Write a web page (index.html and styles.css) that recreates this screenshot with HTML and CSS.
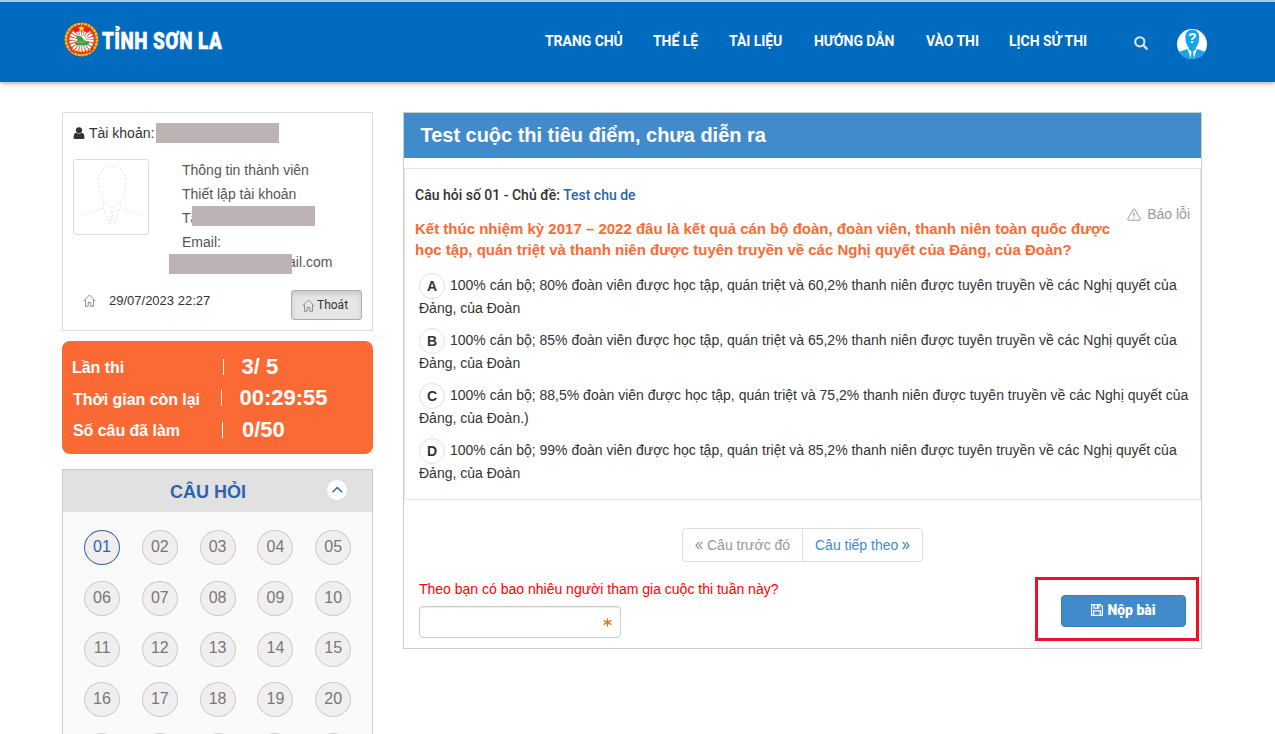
FILE: index.html
```html
<!DOCTYPE html>
<html lang="vi">
<head>
<meta charset="utf-8">
<title>Tỉnh Sơn La - Cuộc thi</title>
<link rel="stylesheet" href="styles.css">
</head>
<body>
<header class="header">
  <a class="brand">
    <svg class="emblem" viewBox="0 0 36 36">
      <circle cx="18" cy="18" r="17.500" fill="#c9471f"/>
      <circle cx="18" cy="18" r="16" fill="none" stroke="#edbe25" stroke-width="2.600" stroke-dasharray="3 .7"/>
      <circle cx="18" cy="18" r="13.500" fill="#e0402a"/>
      <circle cx="18" cy="18.500" r="8.500" fill="none" stroke="#fff" stroke-width="8" stroke-dasharray="1.850 .82"/>
      <circle cx="18" cy="19" r="5" fill="#fff"/>
      <path d="M8 6.500Q18-1 28 6.500L25 11Q18 8 11 11Z" fill="#e62418"/>
      <path d="M18 3l1 2.500h2.600l-2 1.600.8 2.600-2.400-1.500-2.400 1.500.8-2.600-2-1.600H17z" fill="#ffe52e"/>
      <path d="M12 14l6 1 3 4 5 1-1 4H12l-1-3 3-2z" fill="#2fa44c"/>
      <path d="M12 20h9v1.200h-9z" fill="#d49b35"/>
      <path d="M5 26q13 8 26 0l-2 4q-11 7-22 0z" fill="#e22b20"/>
      <path d="M8 28q10 5 20 0M11 32q7 3 14 0" fill="none" stroke="#f6c82b" stroke-width="1.300" stroke-dasharray="2 1"/>
    </svg>
    <span class="brand-name">TỈNH SƠN LA</span>
  </a>
  <nav class="nav">
    <a class="n1">TRANG CHỦ</a><a class="n2">THỂ LỆ</a><a class="n3">TÀI LIỆU</a><a class="n4">HƯỚNG DẪN</a><a class="n5">VÀO THI</a><a class="n6">LỊCH SỬ THI</a>
  </nav>
  <svg class="search" viewBox="0 0 13 13"><circle cx="5.400" cy="5.400" r="4.300" fill="none" stroke="#dfe3e8" stroke-width="1.900"/><path d="M8.600 8.600l3.200 3.200" stroke="#dfe3e8" stroke-width="2.200" stroke-linecap="round"/></svg>
  <svg class="user" viewBox="0 0 30 30">
    <defs><clipPath id="disc"><circle cx="15" cy="15" r="15"/></clipPath></defs>
    <g clip-path="url(#disc)"><rect width="30" height="30" fill="#fff"/>
    <path d="M15.300.8c4.700 0 7 3.200 6.900 8 0 4.200-1.600 8-3.400 10v2l-3.500 1.400-3.500-1.400v-2c-1.800-2-3.400-5.800-3.400-10C8.300 4 10.600.8 15.300.8z" fill="#15a4ec"/>
    <path d="M0 23.500L10.500 20 14 30H0zM30 23.500L20 20l-3.500 10H30z" fill="#15a4ec"/>
    <path d="M13.800 21.500h3l-.7 2 .9 6.500h-3.400l.9-6.500z" fill="#15a4ec"/></g>
    <text class="user-mark" x="15.300" y="14.200" text-anchor="middle">?</text>
  </svg>
</header>
<main class="page">
  <aside class="side">
    <section class="card account">
      <div class="acc-name">
        <svg class="ico-user" viewBox="0 0 12 12"><circle cx="6" cy="3.300" r="3.100" fill="#333"/><path d="M3 5.800q3 2.300 6 0 2.500.7 2.500 4.700Q11.500 12 10 12H2Q.5 12 .5 10.500.5 6.500 3 5.800z" fill="#333"/></svg>
        <span class="t-acc">Tài khoản:</span><i class="mask"></i>
      </div>
      <div class="acc-body">
        <div class="avatar"><svg viewBox="0 0 70 70" fill="none" stroke="#dcdcdc" stroke-dasharray="1.500 2.500"><path d="M36 4C25 4 22 13 22 21c0 9 4 14 6 19l8 6 8-6c3-5 6-10 6-19C50 12 46 4 36 4zM28 40l-1 6L2 54M44 40l1 6 23 8M27 46l7 16 2-14 2 14 6-16"/></svg></div>
        <ul class="acc-links">
          <li class="l1">Thông tin thành viên</li>
          <li class="l2">Thiết lập tài khoản</li>
          <li class="l3">Tà<i class="mask over-name"></i></li>
          <li class="l4">Email:</li>
          <li class="mail"><i class="mask over-mail"></i><span class="l5">ail.com</span></li>
        </ul>
      </div>
      <div class="acc-foot">
        <svg class="house" viewBox="0 0 13 13"><path d="M.6 7L6.500 1l5.900 6M2.500 5.800v6.500h2.700V8.500h2.600v3.800h2.700V5.800" fill="none" stroke="#8c8c8c"/></svg>
        <span class="date">29/07/2023 22:27</span>
        <button class="exit"><svg viewBox="0 0 13 13"><path d="M.6 7L6.500 1l5.900 6M2.500 5.800v6.500h2.700V8.500h2.600v3.800h2.700V5.800" fill="none" stroke="#8c8c8c"/></svg><span>Thoát</span></button>
      </div>
    </section>
    <section class="stats">
      <div class="stat s1"><b>Lần thi</b><i></i><strong>3/ 5</strong></div>
      <div class="stat s2"><b>Thời gian còn lại</b><i></i><strong>00:29:55</strong></div>
      <div class="stat s3"><b>Số câu đã làm</b><i></i><strong>0/50</strong></div>
    </section>
    <section class="questions">
      <div class="q-head"><h2>CÂU HỎI</h2><span class="toggle"><svg viewBox="0 0 20 20"><path d="M5.500 12.200L10.300 7.400l4.800 4.800" fill="none" stroke="#2c63ae" stroke-width="1.400"/></svg></span></div>
      <div class="q-grid">
        <span class="num current">01</span><span class="num">02</span><span class="num">03</span><span class="num">04</span><span class="num">05</span>
        <span class="num">06</span><span class="num">07</span><span class="num">08</span><span class="num">09</span><span class="num">10</span>
        <span class="num">11</span><span class="num">12</span><span class="num">13</span><span class="num">14</span><span class="num">15</span>
        <span class="num">16</span><span class="num">17</span><span class="num">18</span><span class="num">19</span><span class="num">20</span>
        <span class="num"></span><span class="num"></span><span class="num"></span><span class="num"></span><span class="num"></span>
      </div>
    </section>
  </aside>
  <section class="exam">
    <h1 class="exam-title"><span>Test cuộc thi tiêu điểm, chưa diễn ra</span></h1>
    <div class="question">
      <p class="topic"><span class="tp1">Câu hỏi số 01 - Chủ đề:</span> <a class="tp2">Test chu de</a></p>
      <div class="ask">
        <p class="prompt"><span class="pr1">Kết thúc nhiệm kỳ 2017 – 2022 đâu là kết quả cán bộ đoàn, đoàn viên, thanh niên toàn quốc được</span><br><span class="pr2">học tập, quán triệt và thanh niên được tuyên truyền về các Nghị quyết của Đảng, của Đoàn?</span></p>
        <a class="report"><svg viewBox="0 0 14 13"><path d="M6.300 1.200q.7-.8 1.400 0l5.400 9.500q.4 1.400-.8 1.500H1.700Q.5 12.100.9 10.700z" fill="none" stroke="#999"/><path d="M7 4.500v4M7 9.500v1" stroke="#999" stroke-width="1.100"/></svg><span>Báo lỗi</span></a>
      </div>
      <div class="answers">
        <p class="answer"><b class="key">A</b><span class="a1">100% cán bộ; 80% đoàn viên được học tập, quán triệt và 60,2% thanh niên được tuyên truyền về các Nghị quyết của</span><br><span class="an">Đảng, của Đoàn</span></p>
        <p class="answer"><b class="key">B</b><span class="a1">100% cán bộ; 85% đoàn viên được học tập, quán triệt và 65,2% thanh niên được tuyên truyền về các Nghị quyết của</span><br><span class="an">Đảng, của Đoàn</span></p>
        <p class="answer"><b class="key">C</b><span class="a1">100% cán bộ; 88,5% đoàn viên được học tập, quán triệt và 75,2% thanh niên được tuyên truyền về các Nghị quyết của</span><br><span class="an">Đảng, của Đoàn.)</span></p>
        <p class="answer"><b class="key">D</b><span class="a1">100% cán bộ; 99% đoàn viên được học tập, quán triệt và 85,2% thanh niên được tuyên truyền về các Nghị quyết của</span><br><span class="an">Đảng, của Đoàn</span></p>
      </div>
    </div>
    <div class="pager">
      <a class="prev"><svg viewBox="0 0 8 9"><path d="M4 1L.9 4.500 4 8M7.300 1L4.200 4.500 7.300 8" fill="none" stroke="currentColor" stroke-width="1.200"/></svg><span>Câu trước đó</span></a><a class="next"><span>Câu tiếp theo</span><svg viewBox="0 0 8 9"><path d="M.7 1l3.100 3.500L.7 8M4 1l3.100 3.500L4 8" fill="none" stroke="currentColor" stroke-width="1.200"/></svg></a>
    </div>
    <div class="submit-row">
      <label class="guess"><span class="guess-text">Theo bạn có bao nhiêu người tham gia cuộc thi tuần này?</span>
        <span class="field"><svg viewBox="0 0 9 9"><path d="M4.500.3v8.400M.6 2.400l7.800 4.200M.6 6.600l7.800-4.200" stroke="#f87012" stroke-width="1.200"/></svg></span></label>
      <div class="highlight"><button class="submit"><svg viewBox="0 0 12 12" fill="none" stroke="#fff" stroke-width="1.200"><path d="M.6.6h8.700l2.100 2.100v8.700H.6zM3 .6v3.600h5V.6M2.700 11.400V6.800h6.600v4.600M6.500 1v2.500"/></svg><span>Nộp bài</span></button></div>
    </div>
  </section>
</main>
</body>
</html>
```
FILE: styles.css
```css
* { box-sizing: border-box; }
body { margin: 0; height: 734px; overflow: hidden; background: #fff; color: #333; font: 14px/20px "Liberation Sans", Arial, sans-serif; }
h1, h2, p, ul { margin: 0; padding: 0; }
ul { list-style: none; }
svg { display: block; flex: none; }
span, a { white-space: nowrap; }
button { font-family: inherit; margin: 0; padding: 0; }

.header { height: 82px; display: flex; align-items: flex-start; background: #006bbf; border-top: 2px solid #9fd0dc; box-shadow: 0 1px 5px rgba(0, 0, 0, .4); padding-left: 64px; }
.brand { display: flex; width: 481px; padding-top: 20px; }
.emblem { width: 35px; height: 35px; }
.brand-name { color: #fff; font: 900 24px/35px Roboto, sans-serif; letter-spacing: .6px; -webkit-text-stroke: .5px #fff; margin: 2px 0 0 3px; transform: scaleX(.785); transform-origin: 0 0; }
.nav { display: flex; width: 588px; padding-top: 29px; color: #fff; font: 700 14px/20px Roboto, sans-serif; letter-spacing: -.05px; }
.n1 { width: 108px; }
.n2 { width: 76px; }
.n3 { width: 85px; }
.n4 { width: 112px; }
.n5 { width: 83px; }
.search { width: 14px; height: 14px; margin: 34px 0 0 1px; }
.user { width: 30px; height: 30px; margin: 27px 0 0 29px; }
.user-mark { font: 700 14px "Liberation Sans", sans-serif; fill: #fff; }

.page { display: flex; align-items: flex-start; gap: 30px; padding: 30px 0 0 62px; }
.side { width: 311px; display: flex; flex-direction: column; }
.account { height: 219px; border: 1px solid #ddd; padding: 10px; }
.acc-name { display: flex; align-items: center; height: 20px; }
.ico-user { width: 12px; height: 12px; margin-right: 4px; }
.mask { display: block; width: 123px; height: 20px; background: #bdb3b4; }
.acc-name .mask { margin-left: auto; margin-right: 83px; }
.acc-body { display: flex; padding-top: 16px; height: 136px; }
.avatar { width: 76px; height: 76px; border: 1px solid #ddd; border-radius: 3px; padding: 2px; }
.acc-links { margin-left: 33px; margin-top: -1px; line-height: 24px; color: #555; }
.acc-links li { position: relative; height: 24px; }
.over-name { position: absolute; left: 10px; top: 0; }
.acc-links .mail { display: flex; height: 20px; line-height: 18px; margin-left: -13px; margin-top: -1px; }
.acc-links .mail .mask { position: relative; z-index: 1; margin-top: 1px; }
.mail span { margin-left: -4px; }
.acc-foot { display: flex; align-items: flex-start; padding-left: 10px; }
.house { width: 13px; height: 13px; margin-top: 15px; }
.date { font-size: 13px; line-height: 20px; margin: 12px 0 0 13px; }
.exit { display: flex; align-items: center; gap: 2px; width: 71px; height: 30px; margin: 11px 0 0 auto; padding-left: 10px; border: 1px solid #adadad; border-radius: 3px; background: #e6e6e6; box-shadow: inset 0 3px 5px rgba(0, 0, 0, .125); font: 12px/18px Roboto, sans-serif; color: #333; }
.exit svg { width: 13px; height: 13px; }

.stats { height: 113px; margin-top: 10px; padding: 10px; background: #fb6a35; border-radius: 8px; color: #fff; }
.stat { display: flex; align-items: center; height: 31.500px; }
.stat b { width: 151px; font-size: 16px; padding-top: 3px; letter-spacing: -.05px; }
.stat i { width: 1px; height: 16px; background: #fff; }
.stat strong { font-size: 22px; margin-left: 17.500px; }
.s2 b { width: 149px; padding-left: 1px; }
.s3 b { width: 150px; padding-left: 1px; }
.s3 strong { margin-left: 19px; }

.questions { margin-top: 15px; border: 1px solid #ccc; background: #fafafa; height: 280px; overflow: hidden; }
.q-head { display: flex; align-items: center; height: 42px; background: #e1e1e1; }
.q-head h2 { width: 264px; padding-left: 107px; font-size: 18px; color: #2c63ae; white-space: nowrap; padding-top: 2px; }
.toggle { width: 20px; height: 20px; border-radius: 50%; background: #fff; margin-top: -2px; }
.q-grid { display: grid; grid-template-columns: repeat(5, 36px); grid-auto-rows: 35px; gap: 15.800px 21.800px; padding: 18px 0 0 21px; }
.num { display: flex; align-items: center; justify-content: center; border: 1px solid #ccc; border-radius: 50%; background: #f0eeee; color: #777; font-size: 16px; padding-bottom: 1.500px; }
.current { border-color: #2c63ae; color: #2c63ae; }

.exam { width: 799px; height: 537px; border: 1px solid #ccc; }
.exam-title { height: 45px; padding: 11px 16.500px; background: #428bca; color: #fff; font-size: 20px; line-height: 22px; letter-spacing: -.03px; }
.question { height: 332px; margin-top: 10px; border: 1px solid #e5e5e5; padding: 16px 10px 0; }
.topic { font: 500 14px/20px Roboto, sans-serif; white-space: nowrap; }
.topic a { color: #2c63ae; }
.ask { display: flex; justify-content: space-between; padding-top: 13px; height: 57px; }
.prompt { color: #fb6a35; font-weight: 700; font-size: 15px; line-height: 21px; }
.report { display: flex; align-items: center; gap: 6px; height: 20px; margin-top: -14px; color: #999; }
.report svg { width: 14px; height: 13px; }
.answers { display: grid; grid-auto-rows: 55px; padding: 12px 0 0 4px; }
.answer { line-height: 23px; white-space: nowrap; }
.key { display: inline-flex; align-items: center; justify-content: center; width: 26px; height: 26px; margin: -3px 5px -3px 0; vertical-align: middle; border: 1px solid #e1e1e1; border-radius: 50%; font-size: 14px; line-height: 24px; }
.pager { display: flex; justify-content: center; margin-top: 28px; height: 34px; line-height: 32px; }
.pager a { display: flex; align-items: center; gap: 4px; border: 1px solid #ddd; }
.pager svg { width: 8px; height: 9px; }
.prev { width: 121px; padding-left: 12px; color: #999; border-radius: 4px 0 0 4px; }
.next { width: 121px; margin-left: -1px; padding-left: 12px; color: #428bca; border-radius: 0 4px 4px 0; }
.submit-row { display: flex; justify-content: space-between; padding: 15px 2px 0 15px; }
.guess { display: flex; flex-direction: column; gap: 7px; padding-top: 2px; color: #f00; }
.field { display: flex; align-items: center; justify-content: flex-end; width: 202px; height: 32px; padding-right: 8px; border: 1px solid #ccc; border-radius: 4px; box-shadow: inset 0 1px 1px rgba(0, 0, 0, .075); }
.field svg { width: 9px; height: 9px; }
.highlight { width: 164px; height: 64px; border: 3px solid #ed1028; padding: 15px 0 0 23px; }
.submit { display: flex; align-items: center; justify-content: center; gap: 4px; width: 125px; height: 32px; padding-bottom: 2px; border: 1px solid #357ebd; border-radius: 4px; background: #428bca; color: #fff; font: 900 14px/20px Roboto, sans-serif; }
.submit svg { width: 12px; height: 12px; }
```
